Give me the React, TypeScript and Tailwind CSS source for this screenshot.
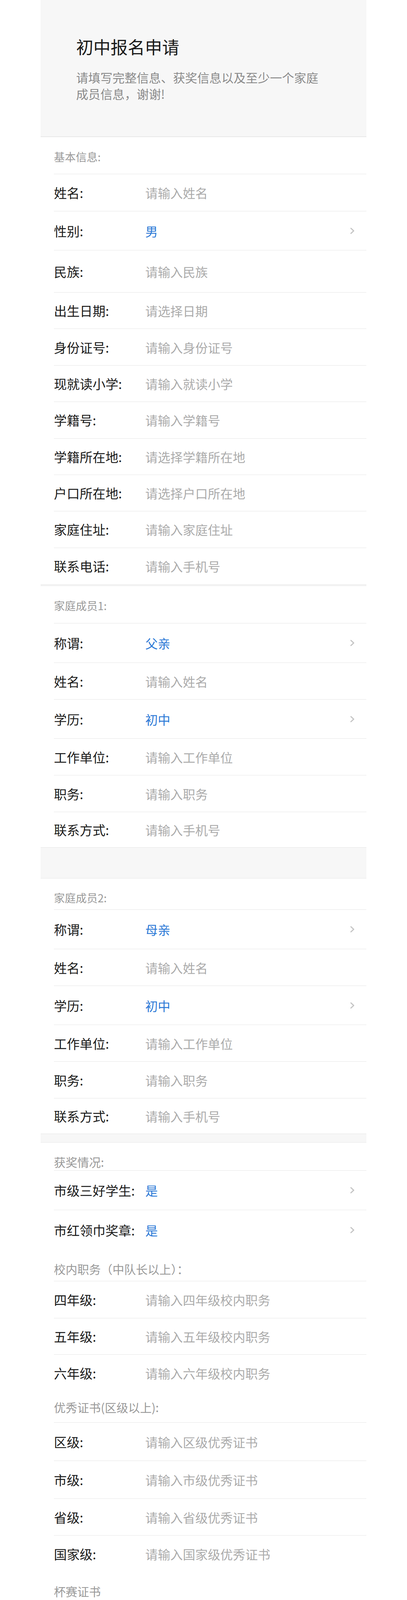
import React from "react";

const FONT = { fontFamily: '"Noto Sans CJK SC", "Noto Sans", sans-serif' };

function Chevron() {
  return (
    <svg width="12" height="18" viewBox="0 0 12 18" className="shrink-0">
      <path d="M2.5 2.5 L9.5 9 L2.5 15.5" fill="none" stroke="#c4c4c4" strokeWidth="3" strokeLinecap="round" strokeLinejoin="round" />
    </svg>
  );
}

type RowProps = {
  label: string;
  text: string;
  value?: boolean;
  h: string;
  line?: boolean;
};

function Row({ label, text, value = false, h, line = true }: RowProps) {
  return (
    <div className="pl-[34px]">
      <div className={`flex items-center pr-[30px] ${h} ${line ? "border-b border-[#e6e6e6]" : ""}`}>
        <div className="w-[234px] shrink-0 whitespace-nowrap text-[33px] leading-[44px] text-[#1a1a1a]">{label}</div>
        <div className={`flex-1 text-[32px] leading-[44px] ${value ? "text-[#2a78d6]" : "text-[#ababab]"}`}>{text}</div>
        {value && <Chevron />}
      </div>
    </div>
  );
}

function Title({ text, h, pt, size = "text-[28px]", line = true }: { text: string; h: string; pt: string; size?: string; line?: boolean }) {
  return (
    <div className="pl-[34px]">
      <div className={`${h} ${pt} ${size} leading-[40px] text-[#999999] ${line ? "border-b border-[#e6e6e6]" : ""}`}>{text}</div>
    </div>
  );
}

function Band({ h }: { h: string }) {
  return <div className={`${h} bg-[#f7f7f7] border-y border-[#e6e6e6]`} />;
}

function TextArea({ placeholder }: { placeholder: string }) {
  return (
    <div className="h-[266px] flex flex-col justify-between border-b border-[#e6e6e6] pl-[34px] pr-[31px] pt-[25px] pb-[28px]">
      <div className="text-[37px] leading-[52px] text-[#ababab]">{placeholder}</div>
      <div className="text-right text-[34px] leading-[44px] text-[#a3a3a3]">0/200</div>
    </div>
  );
}

export default function App() {
  return (
    <div className="bg-white" style={FONT}>
      <div className="mx-auto w-[834px] bg-white">
        {/* Header */}
        <div className="h-[351px] bg-[#f7f7f7] border-b-2 border-[#e8e8e8] pl-[91px] pt-[91px]">
          <div className="text-[44px] leading-[56px] text-[#1a1a1a]">初中报名申请</div>
          <div className="mt-[30px] w-[640px] text-[31px] leading-[42px] text-[#8a8a8a]">
            请填写完整信息、获奖信息以及至少一个家庭成员信息，谢谢!
          </div>
        </div>

        {/* Basic info */}
        <Title text="基本信息:" h="h-[95px]" pt="pt-[30px]" />
        <Row label="姓名:" text="请输入姓名" h="h-[95px]" />
        <Row label="性别:" text="男" value h="h-[100px]" />
        <Row label="民族:" text="请输入民族" h="h-[108px]" />
        <Row label="出生日期:" text="请选择日期" h="h-[93.375px]" />
        <Row label="身份证号:" text="请输入身份证号" h="h-[93.375px]" />
        <Row label="现就读小学:" text="请输入就读小学" h="h-[93.375px]" />
        <Row label="学籍号:" text="请输入学籍号" h="h-[93.375px]" />
        <Row label="学籍所在地:" text="请选择学籍所在地" h="h-[93.375px]" />
        <Row label="户口所在地:" text="请选择户口所在地" h="h-[93.375px]" />
        <Row label="家庭住址:" text="请输入家庭住址" h="h-[93.375px]" />
        <Row label="联系电话:" text="请输入手机号" h="h-[93.375px]" line={false} />
        <Band h="h-[4px]" />

        {/* Family 1 */}
        <Title text="家庭成员1:" h="h-[96px]" pt="pt-[30px]" />
        <Row label="称谓:" text="父亲" value h="h-[101px]" />
        <Row label="姓名:" text="请输入姓名" h="h-[94px]" />
        <Row label="学历:" text="初中" value h="h-[100px]" />
        <Row label="工作单位:" text="请输入工作单位" h="h-[94px]" />
        <Row label="职务:" text="请输入职务" h="h-[94px]" />
        <Row label="联系方式:" text="请输入手机号" h="h-[90px]" line={false} />
        <Band h="h-[80px]" />

        {/* Family 2 */}
        <Title text="家庭成员2:" h="h-[80px]" pt="pt-[29px]" />
        <Row label="称谓:" text="母亲" value h="h-[101px]" />
        <Row label="姓名:" text="请输入姓名" h="h-[94px]" />
        <Row label="学历:" text="初中" value h="h-[100px]" />
        <Row label="工作单位:" text="请输入工作单位" h="h-[94px]" />
        <Row label="职务:" text="请输入职务" h="h-[94px]" />
        <Row label="联系方式:" text="请输入手机号" h="h-[90px]" line={false} />
        <Band h="h-[23px]" />

        {/* Awards */}
        <Title text="获奖情况:" h="h-[72px]" pt="pt-[29px]" size="text-[30px]" />
        <Row label="市级三好学生:" text="是" value h="h-[101px]" />
        <Row label="市红领巾奖章:" text="是" value h="h-[102px]" line={false} />
        <Title text="校内职务（中队长以上）：" h="h-[80px]" pt="pt-[28px]" size="text-[30px]" />
        <Row label="四年级:" text="请输入四年级校内职务" h="h-[95px]" />
        <Row label="五年级:" text="请输入五年级校内职务" h="h-[93px]" />
        <Row label="六年级:" text="请输入六年级校内职务" h="h-[94px]" line={false} />
        <Title text="优秀证书(区级以上):" h="h-[80px]" pt="pt-[20px]" size="text-[30px]" />
        <Row label="区级:" text="请输入区级优秀证书" h="h-[98px]" />
        <Row label="市级:" text="请输入市级优秀证书" h="h-[97px]" />
        <Row label="省级:" text="请输入省级优秀证书" h="h-[94px]" />
        <Row label="国家级:" text="请输入国家级优秀证书" h="h-[94px]" line={false} />

        {/* Cup certificates */}
        <div className="h-[84px] pt-[28px] pl-[34px] border-b border-[#e6e6e6] text-[30px] leading-[40px] text-[#999999]">杯赛证书</div>
        <TextArea placeholder="请输入杯赛证书" />

        {/* Self intro */}
        <div className="h-[122px] pt-[30px] pl-[34px] border-b border-[#e6e6e6] text-[30px] leading-[40px] text-[#999999]">自我介绍</div>
        <TextArea placeholder="自我介绍..." />

        {/* Footer */}
        <div className="bg-[#f7f7f7] px-[34px] pt-[35px] flex flex-col gap-[34px]">
          <button className="h-[101px] w-full rounded-[10px] border border-[#d4d4d4] bg-[#f8f8f8] text-[38px] text-black">
            返回上一页
          </button>
          <button className="h-[102px] w-full rounded-[10px] bg-[#1aad19] text-[38px] text-white">
            提交并保存
          </button>
        </div>
      </div>
    </div>
  );
}
